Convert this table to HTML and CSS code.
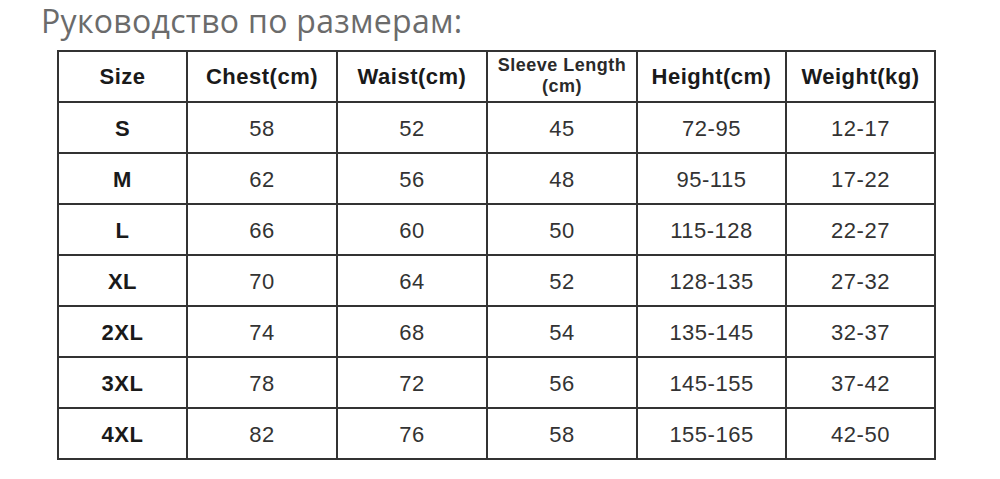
FILE: index.html
```html
<!DOCTYPE html>
<html lang="ru">
<head>
<meta charset="utf-8">
<link rel="stylesheet" href="styles.css">
</head>
<body>
<h1 class="title">Руководство по размерам:</h1>
<table class="size-table">
  <colgroup>
    <col class="c-size"><col class="c-std"><col class="c-std"><col class="c-std"><col class="c-std2"><col class="c-std2">
  </colgroup>
  <thead>
    <tr>
      <th>Size</th>
      <th>Chest(cm)</th>
      <th>Waist(cm)</th>
      <th class="small">Sleeve Length<br>(cm)</th>
      <th>Height(cm)</th>
      <th>Weight(kg)</th>
    </tr>
  </thead>
  <tbody>
    <tr><th>S</th><td>58</td><td>52</td><td>45</td><td>72-95</td><td>12-17</td></tr>
    <tr><th>M</th><td>62</td><td>56</td><td>48</td><td>95-115</td><td>17-22</td></tr>
    <tr><th>L</th><td>66</td><td>60</td><td>50</td><td>115-128</td><td>22-27</td></tr>
    <tr><th>XL</th><td>70</td><td>64</td><td>52</td><td>128-135</td><td>27-32</td></tr>
    <tr><th>2XL</th><td>74</td><td>68</td><td>54</td><td>135-145</td><td>32-37</td></tr>
    <tr><th>3XL</th><td>78</td><td>72</td><td>56</td><td>145-155</td><td>37-42</td></tr>
    <tr><th>4XL</th><td>82</td><td>76</td><td>58</td><td>155-165</td><td>42-50</td></tr>
  </tbody>
</table>
</body>
</html>
```
FILE: styles.css
```css
html, body {
  margin: 0;
  padding: 0;
  background: #ffffff;
}
body {
  width: 1000px;
  height: 479px;
  overflow: hidden;
}
.title {
  margin: 0 0 0 41px;
  padding-top: 5px;
  font-family: "Open Sans", "Noto Sans", sans-serif;
  font-weight: 500;
  font-size: 32px;
  line-height: 32px;
  letter-spacing: 0.3px;
  color: #6b6b6b;
  height: 32px;
}
.size-table {
  margin: 13px 0 0 57px;
  border-collapse: collapse;
  table-layout: fixed;
  width: 877px;
  font-family: "Liberation Sans", Arial, sans-serif;
}
.c-size { width: 129px; }
.c-std { width: 150px; }
.c-std2 { width: 149px; }
.size-table th,
.size-table td {
  border: 2px solid #333333;
  padding: 0;
  text-align: center;
  vertical-align: middle;
  letter-spacing: 0.5px;
}
.size-table thead th {
  height: 49px;
}
.size-table th {
  font-weight: 700;
  font-size: 22px;
  color: #1a1a1a;
}
.size-table thead th.small {
  font-size: 18px;
  line-height: 21px;
  color: #2a2a2a;
  height: 47px;
  padding-bottom: 2px;
}
.size-table td,
.size-table tbody th {
  height: 46px;
  padding-top: 3px;
}
.size-table td {
  font-size: 22px;
  color: #333333;
}
```
